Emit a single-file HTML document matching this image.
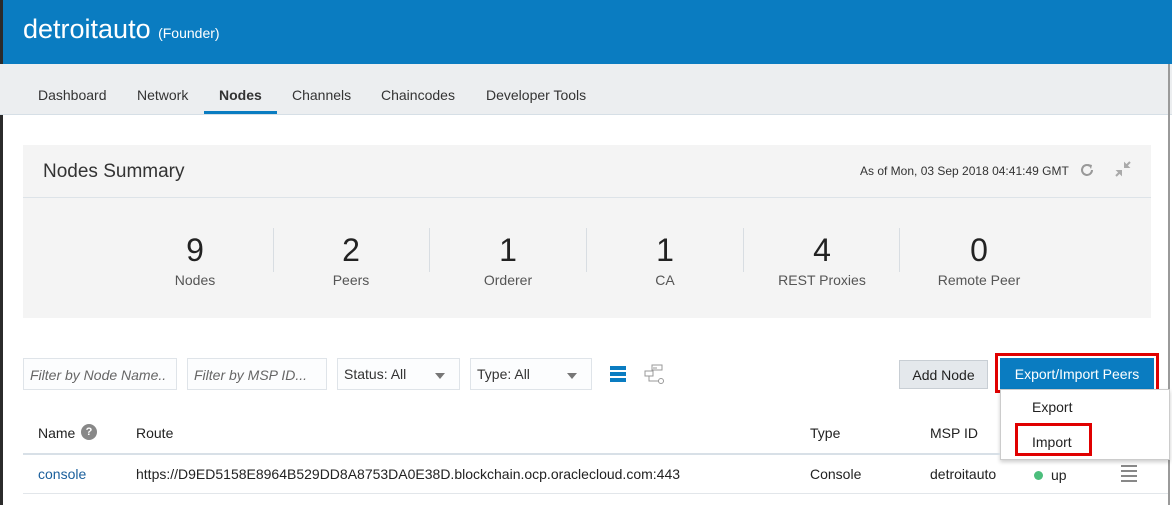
<!DOCTYPE html>
<html><head><style>
*{box-sizing:border-box;margin:0;padding:0}
body{width:1172px;height:505px;overflow:hidden;background:#fff;font-family:"Liberation Sans",sans-serif;color:#333;position:relative}
.abs{position:absolute}
.hdr{left:0;top:0;width:1172px;height:64px;background:#0a7cc1}
.nav{left:0;top:64px;width:1172px;height:51px;background:#eceef0;border-bottom:1px solid #d6dfe6}
.nav span{position:absolute;top:23px;font-size:14px;color:#333}
.inp{height:32px;border:1px solid #dfe4e9;background:#fcfdfe;font-size:14px;font-style:italic;color:#666;padding:8px 6px;top:358px}
.sel{height:32px;border:1px solid #dfe4e9;background:#fcfdfe;font-size:14px;color:#333;padding:7px 6px;top:358px}
.sel i{position:absolute;right:14px;top:14px;border-left:5px solid transparent;border-right:5px solid transparent;border-top:6px solid #777}
.stat{position:absolute;top:232px;width:156px;text-align:center}
.stat b{display:block;font-weight:normal;font-size:32px;color:#222}
.stat span{display:block;font-size:14px;color:#555;margin-top:3px}
.sep{position:absolute;top:228px;width:1px;height:44px;background:#d8dde2}
</style></head><body>
<div class="abs hdr"></div>
<div class="abs" style="left:0;top:0;width:3px;height:505px;background:#2b2b2b"></div>
<div class="abs" style="left:23px;top:14px;font-size:27px;color:#fff">detroitauto <span style="font-size:14px">(Founder)</span></div>
<div class="abs nav">
<span style="left:38px">Dashboard</span><span style="left:137px">Network</span>
<span style="left:219px;font-weight:bold">Nodes</span><span style="left:292px">Channels</span>
<span style="left:381px">Chaincodes</span><span style="left:486px">Developer Tools</span>
<div style="position:absolute;left:204px;top:47px;width:73px;height:3px;background:#0a7cc1"></div>
</div>
<div class="abs" style="left:1168px;top:64px;width:2px;height:441px;background:#9a9a9a"></div>
<div class="abs" style="left:23px;top:145px;width:1128px;height:173px;background:#f4f4f4"></div>
<div class="abs" style="left:23px;top:197px;width:1128px;height:1px;background:#dde3e8"></div>
<div class="abs" style="left:43px;top:161px;font-size:19px;color:#333">Nodes Summary</div>
<div class="abs" style="left:860px;top:164px;font-size:12px;color:#333">As of Mon, 03 Sep 2018 04:41:49 GMT</div>
<svg class="abs" style="left:1078px;top:161px" width="18" height="18" viewBox="0 0 18 18"><path d="M14 9a5 5 0 1 1-2-4" fill="none" stroke="#999" stroke-width="2"/><path d="M10 3l4 1-1 4z" fill="#999"/></svg>
<svg class="abs" style="left:1114px;top:160px" width="18" height="18" viewBox="0 0 18 18"><path d="M2 16l5-5M7 11h-3l3 3zM16 2l-5 5M11 7h3l-3-3z" stroke="#aaa" stroke-width="2" fill="#aaa"/></svg>
<div class="stat" style="left:117px"><b>9</b><span>Nodes</span></div>
<div class="sep" style="left:273px"></div>
<div class="stat" style="left:273px"><b>2</b><span>Peers</span></div>
<div class="sep" style="left:429px"></div>
<div class="stat" style="left:430px"><b>1</b><span>Orderer</span></div>
<div class="sep" style="left:586px"></div>
<div class="stat" style="left:587px"><b>1</b><span>CA</span></div>
<div class="sep" style="left:743px"></div>
<div class="stat" style="left:744px"><b>4</b><span>REST Proxies</span></div>
<div class="sep" style="left:899px"></div>
<div class="stat" style="left:901px"><b>0</b><span>Remote Peer</span></div>
<div class="abs inp" style="left:23px;width:154px">Filter by Node Name..</div>
<div class="abs inp" style="left:187px;width:140px">Filter by MSP ID...</div>
<div class="abs sel" style="left:337px;width:123px">Status: All<i></i></div>
<div class="abs sel" style="left:470px;width:122px">Type: All<i></i></div>
<div class="abs" style="left:610px;top:366px;width:16px;height:4px;background:#0a7cc1;box-shadow:0 6px 0 #0a7cc1,0 12px 0 #0a7cc1"></div>
<svg class="abs" style="left:644px;top:364px" width="22" height="20" viewBox="0 0 22 20"><rect x="8" y="1" width="10" height="5" fill="none" stroke="#999"/><rect x="1" y="7" width="8" height="5" fill="none" stroke="#999"/><path d="M5 12v5h10M13 4H9" stroke="#999" fill="none"/><circle cx="17" cy="17" r="2.5" fill="#fff" stroke="#999"/></svg>
<div class="abs" style="left:899px;top:360px;width:89px;height:29px;background:#e4e8ec;border:1px solid #c8ced4;font-size:14px;color:#222;text-align:center;padding-top:6px">Add Node</div>
<div class="abs" style="left:995px;top:353px;width:164px;height:40px;border:3px solid #e00000"></div>
<div class="abs" style="left:1000px;top:358px;width:154px;height:31px;background:#0a7cc1;color:#fff;font-size:14px;text-align:center;padding-top:8px">Export/Import Peers</div>
<div class="abs" style="left:1000px;top:389px;width:170px;height:71px;background:#fff;border:1px solid #ccc;box-shadow:0 2px 4px rgba(0,0,0,.2)"></div>
<div class="abs" style="left:1032px;top:399px;font-size:14px;color:#222">Export</div>
<div class="abs" style="left:1015px;top:423px;width:77px;height:33px;border:3px solid #e00000"></div>
<div class="abs" style="left:1032px;top:434px;font-size:14px;color:#222">Import</div>
<div class="abs" style="left:38px;top:425px;font-size:14px;color:#222">Name</div>
<div class="abs" style="left:81px;top:424px;width:16px;height:16px;border-radius:50%;background:#888;color:#fff;font-size:11px;font-weight:bold;text-align:center;line-height:16px">?</div>
<div class="abs" style="left:136px;top:425px;font-size:14px;color:#222">Route</div>
<div class="abs" style="left:810px;top:425px;font-size:14px;color:#222">Type</div>
<div class="abs" style="left:930px;top:425px;font-size:14px;color:#222">MSP ID</div>
<div class="abs" style="left:23px;top:453px;width:977px;height:2px;background:#d8e0e7"></div>
<div class="abs" style="left:38px;top:466px;font-size:14px;color:#1a5f9c">console</div>
<div class="abs" style="left:136px;top:466px;font-size:14px;color:#222">https://D9ED5158E8964B529DD8A8753DA0E38D.blockchain.ocp.oraclecloud.com:443</div>
<div class="abs" style="left:810px;top:466px;font-size:14px;color:#222">Console</div>
<div class="abs" style="left:930px;top:466px;font-size:14px;color:#222">detroitauto</div>
<div class="abs" style="left:1034px;top:471px;width:9px;height:9px;border-radius:50%;background:#4cbe7c"></div>
<div class="abs" style="left:1051px;top:467px;font-size:14px;color:#222">up</div>
<div class="abs" style="left:1121px;top:465px;width:16px;height:2px;background:#888;box-shadow:0 5px 0 #888,0 10px 0 #888,0 15px 0 #888"></div>
<div class="abs" style="left:23px;top:493px;width:1145px;height:1px;background:#e2e6ea"></div>
</body></html>
